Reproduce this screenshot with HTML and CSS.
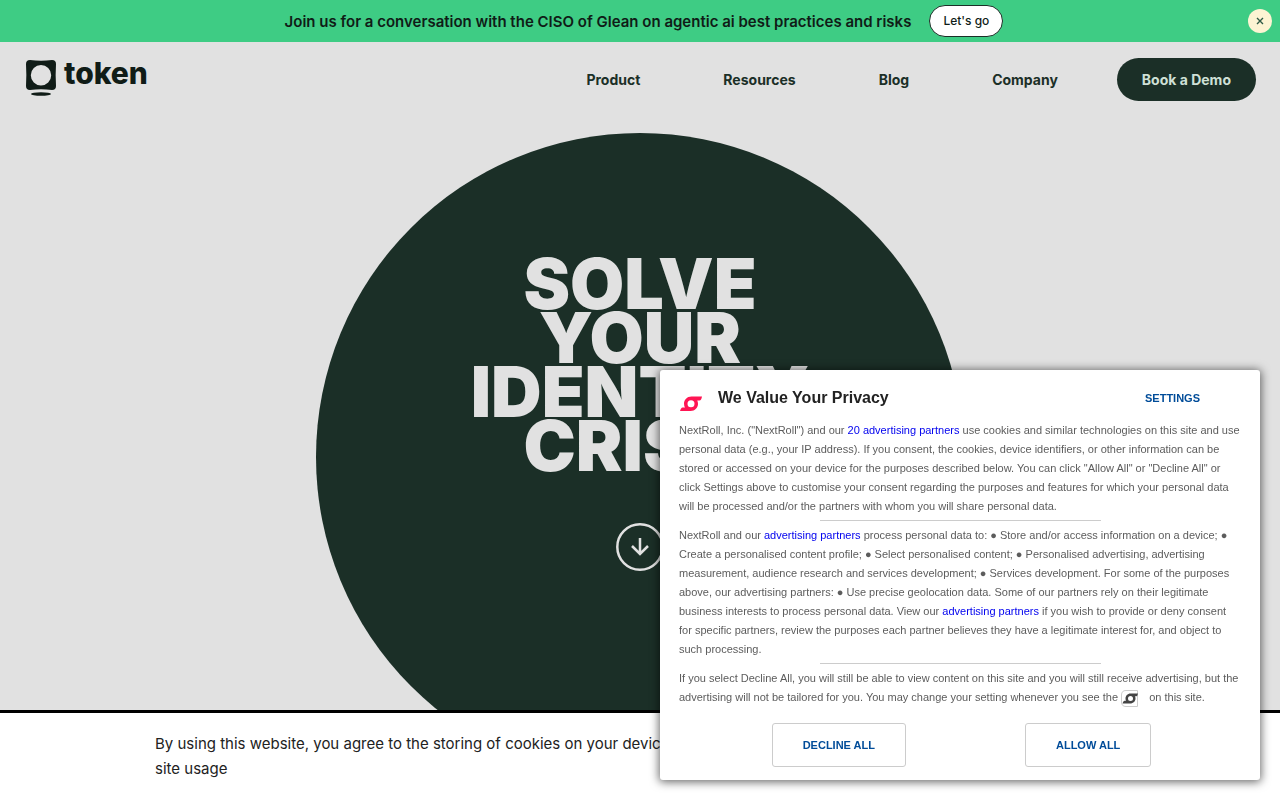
FILE: index.html
```html
<!DOCTYPE html>
<html lang="en">
<head>
    <meta charset="UTF-8" />
    <meta name="viewport" content="width=device-width, initial-scale=1.0" />
    <title>Token</title>
    <link rel="stylesheet" href="styles.css">
</head>
<body>
    <div class="announcement">
        <p class="announcement-text">Join us for a conversation with the CISO of Glean on agentic ai best practices and risks</p>
        <a class="announcement-link" href="#">Let's go</a>
        <button class="announcement-close" type="button" aria-label="Close">
            <svg width="8" height="8" viewBox="0 0 8 8"><path d="M1 1l6 6M7 1L1 7" stroke="#2f5a45" stroke-width="1.4" fill="none"/></svg>
        </button>
    </div>

    <header>
        <a class="logo" href="#">
            <svg width="32" height="38" viewBox="0 0 32 38">
                <path fill="#101c17" fill-rule="evenodd" d="M5 1Q16 2.500 27 1Q31 1 31 5Q30.300 16 31 27Q31 31 27 31Q16 29.500 5 31Q1 31 1 27Q1.700 16 1 5Q1 1 5 1ZM16 6a10.200 10.200 0 1 0 0 20.400a10.200 10.200 0 1 0 0-20.400Z"/>
                <ellipse cx="16" cy="35" rx="10" ry="1.800" fill="#101c17"/>
            </svg>
            <span>token</span>
        </a>
        <nav>
            <a href="#">Product</a>
            <a href="#">Resources</a>
            <a href="#">Blog</a>
            <a href="#">Company</a>
        </nav>
        <a class="demo" href="#">Book a Demo</a>
    </header>

    <main>
        <div class="circle">
            <h1>Solve<br>your<br>identity<br>crisis</h1>
            <a class="scroll-down" href="#" aria-label="Scroll down">
                <svg width="48" height="48" viewBox="0 0 48 48" fill="none" stroke="#e1e1e1">
                    <circle cx="24" cy="24" r="22.700" stroke-width="2.500"/>
                    <path d="M24 15v16M16 23l8 8 8-8" stroke-width="2.500"/>
                </svg>
            </a>
        </div>
    </main>

    <div class="cookie-bar">
        <p>By using this website, you agree to the storing of cookies on your device to enhance site navigation and analyze site usage</p>
    </div>

    <section class="consent" role="dialog" aria-labelledby="consent-title">
        <div class="consent-head">
            <svg class="consent-logo" width="22" height="16" viewBox="0 0 22 16">
                <path fill="#ff1553" fill-rule="evenodd" d="M22 .5H11.500C7 .5 4 4 4 7.500Q4 10 5 11.500H2.500Q1 11.500 0 15H10.500C15 15 18 11.500 18 8Q18 6 17.300 4.500H19.500Q21.300 4.300 22 .5ZM11 4.300a3.500 3.500 0 1 0 0 7a3.500 3.500 0 1 0 0-7Z"/>
            </svg>
            <h2 id="consent-title">We Value Your Privacy</h2>
            <button class="settings" type="button">SETTINGS</button>
        </div>
        <p>NextRoll, Inc. ("NextRoll") and our <a href="#">20 advertising partners</a> use cookies and similar technologies on this site and use personal data (e.g., your IP address). If you consent, the cookies, device identifiers, or other information can be stored or accessed on your device for the purposes described below. You can click "Allow All" or "Decline All" or click Settings above to customise your consent regarding the purposes and features for which your personal data will be processed and/or the partners with whom you will share personal data.</p>
        <hr>
        <p>NextRoll and our <a href="#">advertising partners</a> process personal data to: ● Store and/or access information on a device; ● Create a personalised content profile; ● Select personalised content; ● Personalised advertising, advertising measurement, audience research and services development; ● Services development. For some of the purposes above, our advertising partners: ● Use precise geolocation data. Some of our partners rely on their legitimate business interests to process personal data. View our <a href="#">advertising partners</a> if you wish to provide or deny consent for specific partners, review the purposes each partner believes they have a legitimate interest for, and object to such processing.</p>
        <hr>
        <p>If you select Decline All, you will still be able to view content on this site and you will still receive advertising, but the advertising will not be tailored for you. You may change your setting whenever you see the <svg class="badge" width="17" height="17" viewBox="0 0 17 17"><path d="M16.500 .5H5Q.5 .5 .5 5V12Q.5 16.500 5 16.500H16.500Z" fill="#fff" stroke="#ccc"/><path fill="#444" fill-rule="evenodd" d="M17 3.500H9.500C6.500 3.500 4.500 6 4.500 8.500Q4.500 9.800 5 10.700H3.500Q2.200 10.700 1.500 13.500H9C12.500 13.500 14.500 11 14.500 8.500Q14.500 7.200 14 6.300H15.200Q16.500 6.200 17 3.500ZM9.500 6a2.500 2.500 0 1 0 0 5a2.500 2.500 0 1 0 0-5Z"/></svg> on this site.</p>
        <div class="consent-actions">
            <button type="button">DECLINE ALL</button>
            <button type="button">ALLOW ALL</button>
        </div>
    </section>
</body>
</html>
```
FILE: styles.css
```css
* {
    box-sizing: border-box;
}

body {
    font-family: Inter, "Open Sans", sans-serif;
    margin: 0;
    min-height: 100vh;
    background-color: #e1e1e1;
    color: #1b2f27;
    display: flex;
    flex-direction: column;
}

a {
    text-decoration: none;
    color: inherit;
}

p {
    margin: 0;
}

button {
    cursor: pointer;
}

.announcement {
    position: relative;
    display: flex;
    justify-content: center;
    align-items: center;
    gap: 18px;
    height: 42px;
    padding: 0 24px 0 32px;
    background-color: #3ecc84;
    color: #101c17;
}

.announcement-text {
    font-size: 15px;
    font-weight: 600;
}

.announcement-link {
    padding: 0 13px;
    border: 1px solid #1b2f27;
    border-radius: 16px;
    background-color: #fff;
    font-size: 12px;
    font-weight: 500;
    line-height: 30px;
}

.announcement-close {
    position: absolute;
    top: 9px;
    right: 8px;
    display: flex;
    justify-content: center;
    align-items: center;
    width: 24px;
    height: 24px;
    padding: 0;
    border: none;
    border-radius: 50%;
    background-color: #fdf4d3;
}

header {
    display: flex;
    align-items: center;
    height: 75px;
    padding: 0 24px;
}

.logo {
    display: flex;
    align-items: flex-start;
    gap: 7px;
    margin: 0 auto 4px 0;
    padding-left: 1px;
    color: #101c17;
    font-size: 30px;
    font-weight: 800;
    line-height: 28px;
}

nav {
    display: flex;
    gap: 83px;
    margin-right: 59px;
    font-size: 14px;
    font-weight: 700;
}

.demo {
    padding: 0 25px;
    border-radius: 22px;
    background-color: #1b2f27;
    color: #cfe0d6;
    font-size: 14px;
    font-weight: 700;
    line-height: 43px;
}

/* hero */
main {
    flex: 1;
    height: 683px;
    padding-top: 16px;
    overflow: hidden;
}

.circle {
    display: flex;
    flex-direction: column;
    align-items: center;
    width: 648px;
    max-width: 100%;
    aspect-ratio: 1;
    margin: 0 auto;
    padding-top: 124px;
    border-radius: 50%;
    background-color: #1b2f27;
    color: #e1e1e1;
}

h1 {
    margin: 0 0 50px;
    font-size: 70px;
    font-weight: 900;
    line-height: 54px;
    text-align: center;
    text-transform: uppercase;
}

.scroll-down svg {
    display: block;
}

.cookie-bar {
    position: fixed;
    left: 0;
    right: 0;
    bottom: 0;
    padding: 18px 320px 19px 155px;
    border-top: 3px solid #000;
    background-color: #fff;
    color: #222;
    font-size: 15px;
    line-height: 25px;
}

/* privacy dialog */
.consent {
    position: fixed;
    right: 20px;
    bottom: 20px;
    width: 600px;
    padding: 14px 19px 13px;
    border-radius: 3px;
    background-color: #fff;
    box-shadow: 0 1px 10px 1px rgba(0, 0, 0, 0.6);
    color: #5c5c5c;
    font-family: "Liberation Sans", Arial, sans-serif;
    font-size: 11px;
    line-height: 19px;
}

.consent-head {
    display: flex;
    align-items: center;
    padding: 0 41px 9px 1px;
}

.consent-logo {
    margin: 12px 16px 0 0;
}

.consent h2 {
    margin: 0 auto 0 0;
    color: #222;
    font-size: 16px;
    line-height: 24px;
}

.consent button {
    background-color: #fff;
    color: #004c99;
    font-family: inherit;
    font-size: 11px;
    font-weight: bold;
}

.consent .settings {
    padding: 0;
    border: none;
}

.consent a {
    color: #0000ee;
}

.consent hr {
    width: 50%;
    margin: 4px auto 5px;
    border: none;
    border-top: 1px solid #ccc;
}

.badge {
    margin-right: 8px;
    vertical-align: middle;
}

.consent-actions {
    display: flex;
    justify-content: center;
    gap: 119px;
    margin-top: 16px;
    padding-left: 3px;
}

.consent-actions button {
    height: 44px;
    padding: 0 30px;
    border: 1px solid #ccc;
    border-radius: 3px;
}
```
